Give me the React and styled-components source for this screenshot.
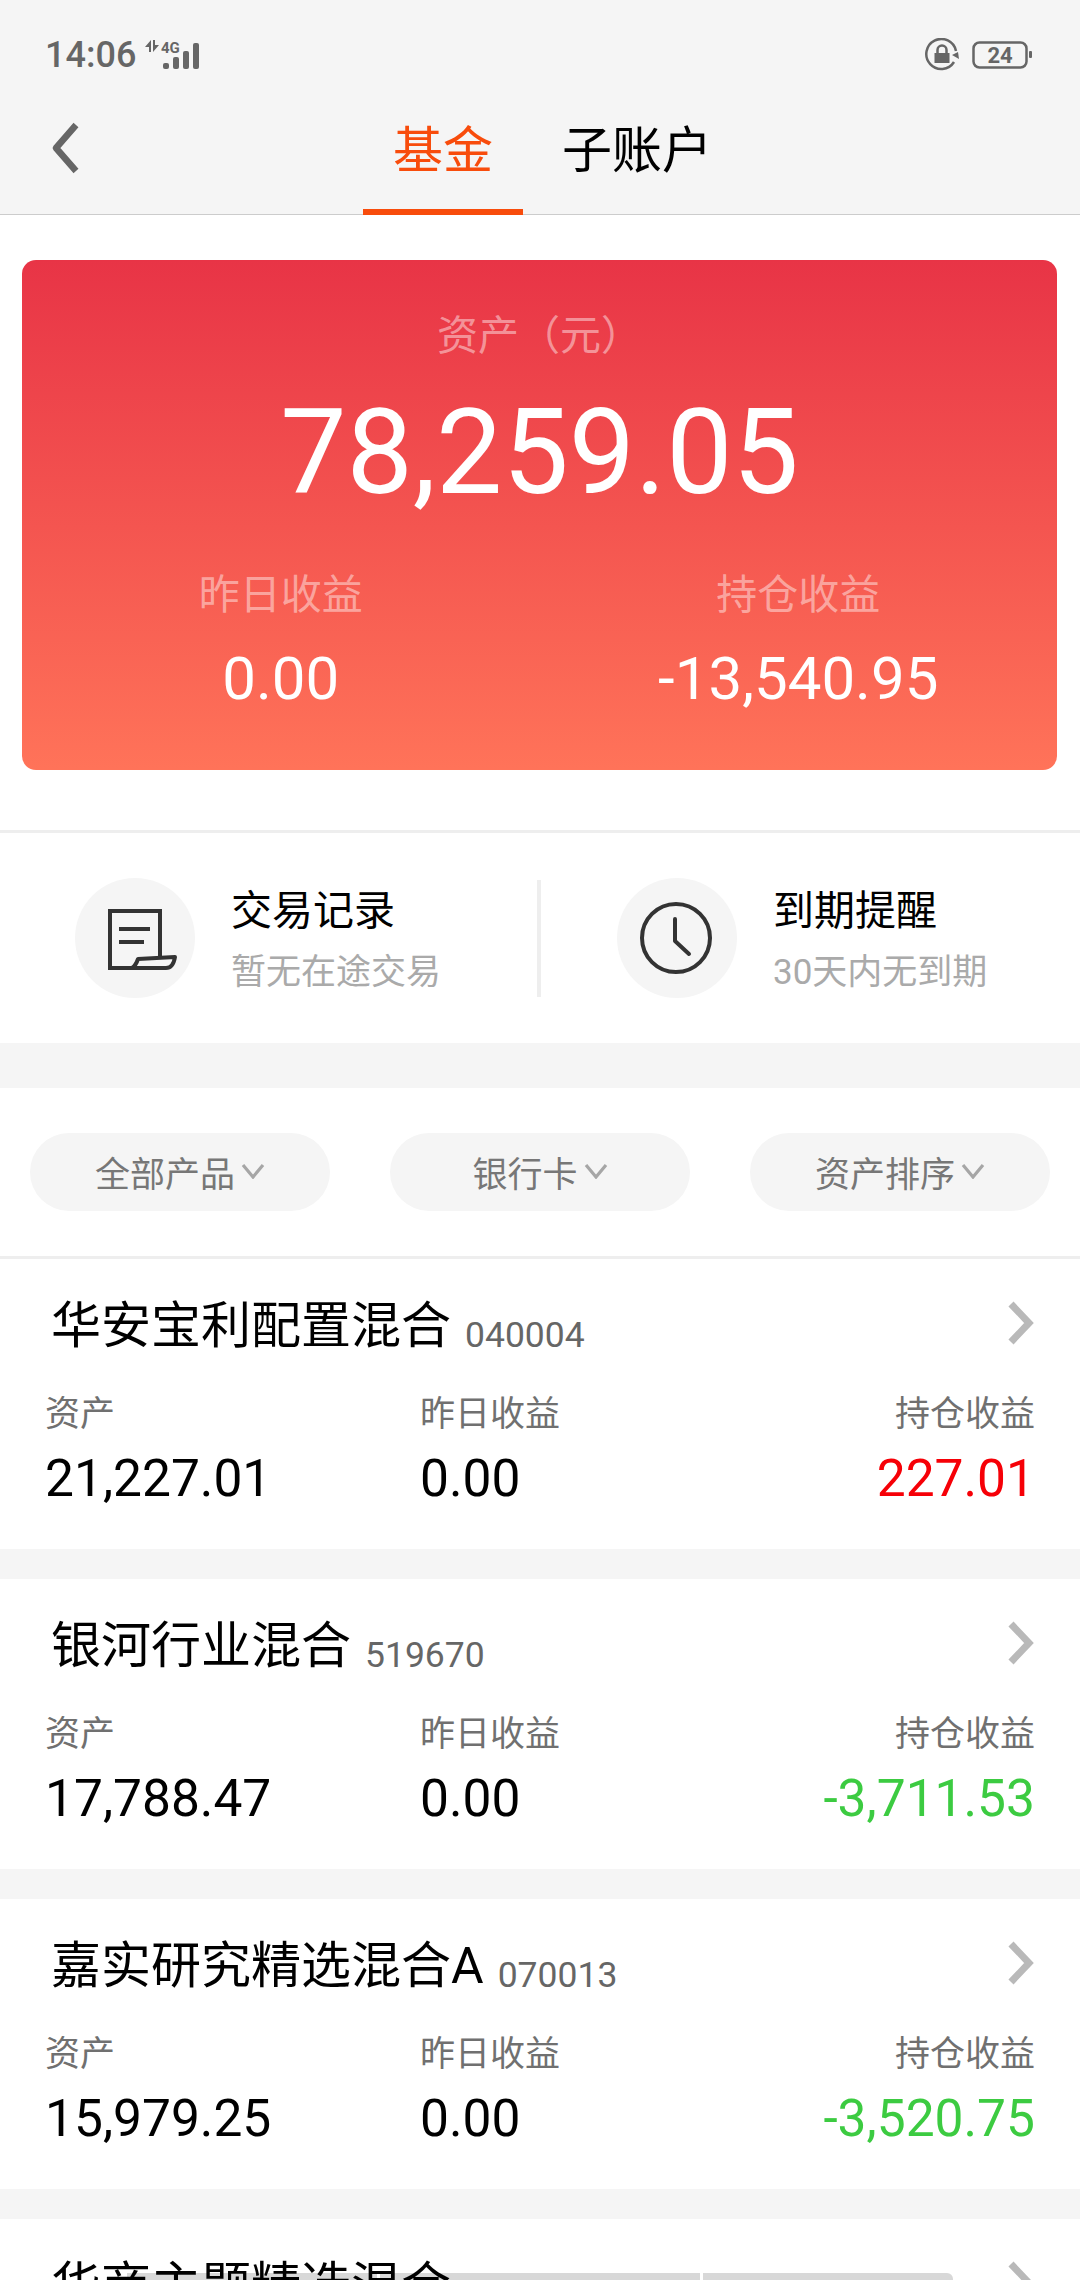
import React from "react";
import styled, { createGlobalStyle } from "styled-components";

const GlobalStyle = createGlobalStyle`
  html, body {
    margin: 0;
    padding: 0;
    background: #fff;
  }

  body {
    font-family: Roboto, "Noto Sans CJK SC", sans-serif;
  }

  * {
    box-sizing: border-box;
  }
`;

const Page = styled.div`
  position: relative;
  width: 1080px;
  height: 2280px;
  overflow: hidden;
  background: #fff;
`;

const Header = styled.header`
  background: #f5f5f5;
  border-bottom: 1px solid #ccc;
`;

const StatusBar = styled.div`
  display: flex;
  align-items: center;
  justify-content: space-between;
  height: 78px;
  padding: 32px 48px 0 45px;
  color: #666;
`;

const StatusGroup = styled.div`
  display: flex;
  align-items: center;
`;

const Time = styled.span`
  font-size: 36px;
  font-weight: 500;
  line-height: 46px;
`;

const TabRow = styled.nav`
  display: flex;
  height: 136px;
`;

const Back = styled.div`
  width: 363px;
  padding: 44px 0 0 49px;
`;

const Tab = styled.div`
  position: relative;
  height: 137px;
  padding: 43px 30px 0;
  margin-right: 9px;
  font-size: 50px;
  line-height: 60px;
  color: ${(p) => (p.$active ? "#f84c0c" : "#000")};

  &::after {
    content: "";
    display: ${(p) => (p.$active ? "block" : "none")};
    position: absolute;
    left: 0;
    right: 0;
    bottom: 0;
    height: 6px;
    background: #f84c0c;
  }
`;

const Hero = styled.section`
  height: 510px;
  margin: 45px 23px 60px 22px;
  padding-top: 46px;
  border-radius: 14px;
  background: linear-gradient(180deg, #e83446 0%, #ff7359 100%);
  color: #fff;
  text-align: center;
`;

const HeroLabel = styled.div`
  font-size: 41px;
  line-height: 60px;
  color: rgba(255, 255, 255, 0.45);
`;

const HeroTotal = styled.div`
  margin: 22px 0 47px;
  font-size: 118px;
  line-height: 130px;
`;

const HeroStats = styled.div`
  display: grid;
  grid-template-columns: 1fr 1fr;
`;

const HeroValue = styled.div`
  margin-top: 19px;
  font-size: 60px;
  line-height: 70px;
`;

const Divider = styled.div`
  height: ${(p) => p.$height}px;
  background: ${(p) => p.$color};
`;

const QuickLinks = styled.section`
  display: flex;
  align-items: center;
  height: 210px;
`;

const QuickLink = styled.div`
  display: flex;
  align-items: center;
  width: ${(p) => p.$width}px;
  padding-left: ${(p) => p.$inset}px;
`;

const Sep = styled.div`
  width: 4px;
  height: 117px;
  background: #eee;
`;

const IconCircle = styled.div`
  flex: none;
  width: 120px;
  height: 120px;
  margin-right: 36px;
  border-radius: 50%;
  background: #f5f5f5;

  svg {
    display: block;
  }
`;

const LinkTitle = styled.div`
  font-size: 41px;
  line-height: 58px;
  color: #000;
`;

const LinkSub = styled.div`
  margin: 9px 0 -2px;
  font-size: 35px;
  line-height: 48px;
  color: #aaa;
`;

const Filters = styled.section`
  display: flex;
  justify-content: space-between;
  padding: 45px 30px;
`;

const Pill = styled.div`
  display: flex;
  align-items: center;
  justify-content: center;
  gap: 6px;
  width: 300px;
  height: 78px;
  padding-bottom: 2px;
  border-radius: 39px;
  background: #f5f5f5;
  font-size: 35px;
  color: #777;
`;

const Card = styled.article`
  height: 290px;
  padding: 32px 45px 0 45px;
  background: #fff;
`;

const Gap = styled.div`
  height: 30px;
  background: #f5f5f5;
`;

const TitleRow = styled.div`
  position: relative;
  z-index: 1;
  display: flex;
  align-items: center;
  justify-content: space-between;
  height: 70px;
  padding-left: 6px;
`;

const TitleText = styled.div`
  display: flex;
  align-items: center;
`;

const FundName = styled.span`
  font-size: 50px;
  line-height: 70px;
  color: #000;
`;

const FundCode = styled.span`
  margin: 17px 0 0 14px;
  font-size: 35.5px;
  color: #666;
`;

const Chevron = styled.div`
  margin-top: -6px;
  line-height: 0;
`;

const StatGrid = styled.div`
  display: grid;
  grid-template-columns: 375px 1fr auto;
  margin-top: 29px;
`;

const Stat = styled.div`
  text-align: ${(p) => (p.$right ? "right" : "left")};
`;

const StatLabel = styled.div`
  font-size: 35px;
  line-height: 50px;
  color: #707070;
`;

const StatValue = styled.div`
  margin-top: 9px;
  font-size: 51.5px;
  line-height: 60px;
  color: ${(p) => p.$color || "#000"};
`;

const ScrollHint = styled.div`
  position: absolute;
  left: 127px;
  top: 2273px;
  display: flex;
  gap: 3px;
`;

const ScrollPiece = styled.div`
  width: ${(p) => p.$width}px;
  height: 7px;
  background: #d8d8d8;

  &:last-child {
    border-top-right-radius: 6px;
  }
`;

const funds = [
  { name: "华安宝利配置混合", code: "040004", asset: "21,227.01", gain: "227.01", color: "#f60007" },
  { name: "银河行业混合", code: "519670", asset: "17,788.47", gain: "-3,711.53", color: "#3ccb41" },
  { name: "嘉实研究精选混合A", code: "070013", asset: "15,979.25", gain: "-3,520.75", color: "#3ccb41" },
  { name: "华商主题精选混合" },
];

function Signal() {
  return (
    <svg width="62" height="32" viewBox="0 0 62 32" style={{ marginLeft: 8 }}>
      <path d="M7 1v12H5V8H1zM9 13V1h2v5h4z" fill="#666" />
      <text x="17" y="14" fontFamily="Roboto" fontWeight="700" fontSize="15" fill="#666">
        4G
      </text>
      <rect x="19" y="24" width="6" height="6" rx="2" fill="#666" />
      <rect x="29" y="18" width="6" height="12" rx="2" fill="#666" />
      <rect x="39" y="12" width="6" height="18" rx="2" fill="#666" />
      <rect x="49" y="4" width="6" height="26" rx="2" fill="#666" />
    </svg>
  );
}

function RotationLock() {
  return (
    <svg width="34" height="34" viewBox="0 0 34 34">
      <path d="M29 24A15 15 0 1 1 31 13" fill="none" stroke="#666" strokeWidth="2.5" />
      <path d="M27 17l6-3 1 7z" fill="#666" />
      <rect x="9.5" y="15" width="15" height="10" fill="#666" />
      <path d="M12.5 15v-3a4.5 4.5 0 0 1 9 0v3" fill="none" stroke="#666" strokeWidth="2.5" />
    </svg>
  );
}

function Battery() {
  return (
    <svg width="60" height="28" viewBox="0 0 60 28" style={{ marginLeft: 13 }}>
      <rect x="1.5" y="1.5" width="53" height="25" rx="6" fill="none" stroke="#666" strokeWidth="2.5" />
      <text x="28" y="21.5" textAnchor="middle" fontFamily="Roboto" fontWeight="700" fontSize="22" fill="#666">
        24
      </text>
      <rect x="57" y="10" width="3" height="7" rx="1" fill="#666" />
    </svg>
  );
}

function BackIcon() {
  return (
    <svg width="32" height="52" viewBox="0 0 32 52">
      <path d="M27 3L7 26l20 23" fill="none" stroke="#666" strokeWidth="6.5" strokeLinejoin="round" />
    </svg>
  );
}

function ReceiptIcon() {
  return (
    <svg width="120" height="120" viewBox="0 0 120 120">
      <path d="M85 79V33H35v57h24" fill="none" stroke="#333" strokeWidth="4" />
      <path d="M63 81l37-2c-1 6-4 11-9 11H57c3-2 5-6 6-9z" fill="none" stroke="#333" strokeWidth="4" strokeLinejoin="round" />
      <path d="M44 51h31M44 64h25" fill="none" stroke="#333" strokeWidth="4" />
    </svg>
  );
}

function ClockIcon() {
  return (
    <svg width="120" height="120" viewBox="0 0 120 120">
      <circle cx="59" cy="60" r="34" fill="none" stroke="#333" strokeWidth="4" />
      <path d="M58 41v22l14 13" fill="none" stroke="#333" strokeWidth="4" strokeLinecap="round" strokeLinejoin="round" />
    </svg>
  );
}

function DownIcon() {
  return (
    <svg width="24" height="16" viewBox="0 0 24 16">
      <path d="M2 2l10 12L22 2" fill="none" stroke="#a6a6a6" strokeWidth="3.2" />
    </svg>
  );
}

function RightIcon() {
  return (
    <svg width="28" height="44" viewBox="0 0 28 44">
      <path d="M4 3l18 19L4 41" fill="none" stroke="#b9b9b9" strokeWidth="7" />
    </svg>
  );
}

function App() {
  return (
    <Page>
      <GlobalStyle />
      <Header>
        <StatusBar>
          <StatusGroup>
            <Time>14:06</Time>
            <Signal />
          </StatusGroup>
          <StatusGroup>
            <RotationLock />
            <Battery />
          </StatusGroup>
        </StatusBar>
        <TabRow>
          <Back>
            <BackIcon />
          </Back>
          <Tab $active>基金</Tab>
          <Tab>子账户</Tab>
        </TabRow>
      </Header>

      <Hero>
        <HeroLabel>资产（元）</HeroLabel>
        <HeroTotal>78,259.05</HeroTotal>
        <HeroStats>
          <div>
            <HeroLabel>昨日收益</HeroLabel>
            <HeroValue>0.00</HeroValue>
          </div>
          <div>
            <HeroLabel>持仓收益</HeroLabel>
            <HeroValue>-13,540.95</HeroValue>
          </div>
        </HeroStats>
      </Hero>

      <Divider $height={3} $color="#eee" />
      <QuickLinks>
        <QuickLink $width={537} $inset={75}>
          <IconCircle>
            <ReceiptIcon />
          </IconCircle>
          <div>
            <LinkTitle>交易记录</LinkTitle>
            <LinkSub>暂无在途交易</LinkSub>
          </div>
        </QuickLink>
        <Sep />
        <QuickLink $width={539} $inset={76}>
          <IconCircle>
            <ClockIcon />
          </IconCircle>
          <div>
            <LinkTitle>到期提醒</LinkTitle>
            <LinkSub>30天内无到期</LinkSub>
          </div>
        </QuickLink>
      </QuickLinks>
      <Divider $height={45} $color="#f5f5f5" />

      <Filters>
        {["全部产品", "银行卡", "资产排序"].map((label) => (
          <Pill key={label}>
            {label}
            <DownIcon />
          </Pill>
        ))}
      </Filters>
      <Divider $height={3} $color="#eee" />

      {funds.map((fund) => (
        <React.Fragment key={fund.name}>
          <Card>
            <TitleRow>
              <TitleText>
                <FundName>{fund.name}</FundName>
                {fund.code && <FundCode>{fund.code}</FundCode>}
              </TitleText>
              <Chevron>
                <RightIcon />
              </Chevron>
            </TitleRow>
            {fund.asset && (
              <StatGrid>
                <Stat>
                  <StatLabel>资产</StatLabel>
                  <StatValue>{fund.asset}</StatValue>
                </Stat>
                <Stat>
                  <StatLabel>昨日收益</StatLabel>
                  <StatValue>0.00</StatValue>
                </Stat>
                <Stat $right>
                  <StatLabel>持仓收益</StatLabel>
                  <StatValue $color={fund.color}>{fund.gain}</StatValue>
                </Stat>
              </StatGrid>
            )}
          </Card>
          <Gap />
        </React.Fragment>
      ))}

      <ScrollHint>
        <ScrollPiece $width={250} />
        <ScrollPiece $width={320} />
        <ScrollPiece $width={250} />
      </ScrollHint>
    </Page>
  );
}

export default App;
